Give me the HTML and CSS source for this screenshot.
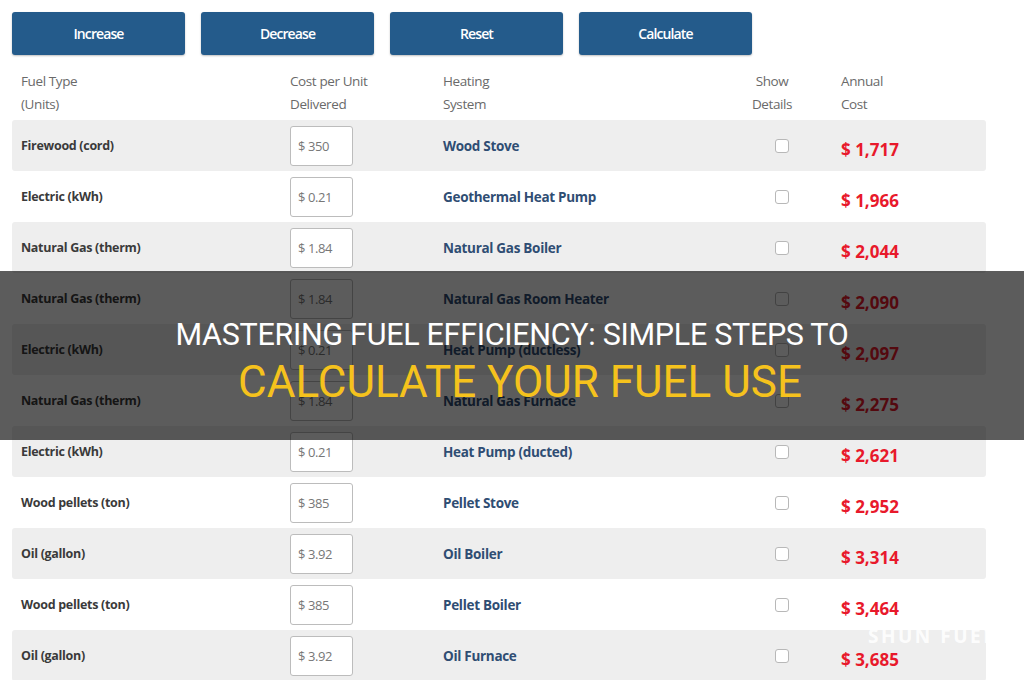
FILE: index.html
```html
<!DOCTYPE html>
<html lang="en">
<head>
    <meta charset="UTF-8">
    <meta name="viewport" content="width=device-width, initial-scale=1.0">
    <title>Mastering Fuel Efficiency</title>
    <link rel="stylesheet" href="styles.css">
</head>
<body>
    <div class="calculator">
        <div class="actions">
            <button class="btn">Increase</button>
            <button class="btn">Decrease</button>
            <button class="btn">Reset</button>
            <button class="btn">Calculate</button>
        </div>

        <div class="grid head">
            <div>Fuel Type<br>(Units)</div>
            <div>Cost per Unit<br>Delivered</div>
            <div>Heating<br>System</div>
            <div class="details-head">Show<br>Details</div>
            <div>Annual<br>Cost</div>
        </div>

        <div class="grid row">
            <div class="fuel">Firewood (cord)</div>
            <div><span class="price">$ 350</span></div>
            <div class="system">Wood Stove</div>
            <div><span class="check"></span></div>
            <div class="cost">$ 1,717</div>
        </div>
        <div class="grid row">
            <div class="fuel">Electric (kWh)</div>
            <div><span class="price">$ 0.21</span></div>
            <div class="system">Geothermal Heat Pump</div>
            <div><span class="check"></span></div>
            <div class="cost">$ 1,966</div>
        </div>
        <div class="grid row">
            <div class="fuel">Natural Gas (therm)</div>
            <div><span class="price">$ 1.84</span></div>
            <div class="system">Natural Gas Boiler</div>
            <div><span class="check"></span></div>
            <div class="cost">$ 2,044</div>
        </div>
        <div class="grid row">
            <div class="fuel">Natural Gas (therm)</div>
            <div><span class="price">$ 1.84</span></div>
            <div class="system">Natural Gas Room Heater</div>
            <div><span class="check"></span></div>
            <div class="cost">$ 2,090</div>
        </div>
        <div class="grid row">
            <div class="fuel">Electric (kWh)</div>
            <div><span class="price">$ 0.21</span></div>
            <div class="system">Heat Pump (ductless)</div>
            <div><span class="check"></span></div>
            <div class="cost">$ 2,097</div>
        </div>
        <div class="grid row">
            <div class="fuel">Natural Gas (therm)</div>
            <div><span class="price">$ 1.84</span></div>
            <div class="system">Natural Gas Furnace</div>
            <div><span class="check"></span></div>
            <div class="cost">$ 2,275</div>
        </div>
        <div class="grid row">
            <div class="fuel">Electric (kWh)</div>
            <div><span class="price">$ 0.21</span></div>
            <div class="system">Heat Pump (ducted)</div>
            <div><span class="check"></span></div>
            <div class="cost">$ 2,621</div>
        </div>
        <div class="grid row">
            <div class="fuel">Wood pellets (ton)</div>
            <div><span class="price">$ 385</span></div>
            <div class="system">Pellet Stove</div>
            <div><span class="check"></span></div>
            <div class="cost">$ 2,952</div>
        </div>
        <div class="grid row">
            <div class="fuel">Oil (gallon)</div>
            <div><span class="price">$ 3.92</span></div>
            <div class="system">Oil Boiler</div>
            <div><span class="check"></span></div>
            <div class="cost">$ 3,314</div>
        </div>
        <div class="grid row">
            <div class="fuel">Wood pellets (ton)</div>
            <div><span class="price">$ 385</span></div>
            <div class="system">Pellet Boiler</div>
            <div><span class="check"></span></div>
            <div class="cost">$ 3,464</div>
        </div>
        <div class="grid row">
            <div class="fuel">Oil (gallon)</div>
            <div><span class="price">$ 3.92</span></div>
            <div class="system">Oil Furnace</div>
            <div><span class="check"></span></div>
            <div class="cost">$ 3,685</div>
        </div>
    </div>

    <div class="banner">
        <h1>Mastering Fuel Efficiency: Simple Steps To</h1>
        <h2>Calculate Your Fuel Use</h2>
    </div>

    <div class="brand">SHUN FUEL</div>
</body>
</html>
```

FILE: styles.css
```css
body {
    margin: 0;
    height: 680px;
    overflow: hidden;
    position: relative;
    background: #fff;
    font-family: 'Open Sans', 'Liberation Sans', sans-serif;
    color: #333;
}
.calculator {
    padding: 12px 0 0 12px;
    width: 974px;
}
.actions {
    display: flex;
    gap: 16px;
    margin-bottom: 15px;
}
.btn {
    width: 173px;
    height: 43px;
    border: none;
    border-radius: 3px;
    background-color: #245b8b;
    color: #fff;
    font-family: 'Open Sans', sans-serif;
    font-size: 14px;
    font-weight: 600;
    letter-spacing: -0.9px;
    box-shadow: 0 1px 2px rgba(0, 0, 0, 0.25);
}
.grid {
    display: grid;
    grid-template-columns: 269px 153px 307px 91px 1fr;
    padding-left: 9px;
    align-items: center;
}
.head {
    font-size: 13.5px;
    letter-spacing: -0.4px;
    line-height: 23px;
    color: #6a6a6a;
    padding-bottom: 4px;
}
.details-head {
    text-align: center;
    width: 44px;
}
.row {
    height: 51px;
    border-radius: 3px;
}
.row:nth-of-type(odd) {
    background-color: #eeeeee;
}
.fuel {
    font-size: 12.5px;
    font-weight: 700;
    letter-spacing: -0.3px;
    color: #3a3a3a;
}
.price {
    display: flex;
    align-items: center;
    box-sizing: border-box;
    width: 63px;
    height: 40px;
    margin-top: 1px;
    padding-left: 7px;
    background: #fff;
    border: 1px solid #bcbcbc;
    border-radius: 3px;
    font-size: 13px;
    letter-spacing: -0.4px;
    color: #777;
}
.system {
    font-size: 13.5px;
    font-weight: 700;
    letter-spacing: -0.3px;
    color: #2f4d73;
}
.check {
    display: block;
    width: 14px;
    height: 14px;
    box-sizing: border-box;
    margin-left: 25px;
    border: 1.5px solid #b8b8b8;
    border-radius: 3px;
    background: #fff;
}
.cost {
    padding-top: 7px;
    font-size: 17px;
    font-weight: 700;
    letter-spacing: 0;
    color: #e8192b;
}

/* dark title strip across the middle of the page */
.banner {
    position: absolute;
    left: 0;
    top: 271px;
    width: 100%;
    height: 169px;
    background: rgba(0, 0, 0, 0.64);
    display: flex;
    flex-direction: column;
    align-items: center;
    justify-content: center;
    text-align: center;
    font-family: Roboto, 'Liberation Sans', sans-serif;
    text-transform: uppercase;
}
.banner h1 {
    margin: 10px 0 0;
    font-size: 30.5px;
    font-weight: 400;
    line-height: 40px;
    color: #fff;
    letter-spacing: -0.3px;
}
.banner h2 {
    margin: 2px 0 0;
    padding-left: 16px;
    font-size: 44px;
    font-weight: 400;
    line-height: 50px;
    color: #f5c21d;
}
.brand {
    position: absolute;
    left: 868px;
    top: 623px;
    font-size: 19px;
    font-weight: 700;
    letter-spacing: 2.5px;
    color: rgba(255, 255, 255, 0.9);
}
```
